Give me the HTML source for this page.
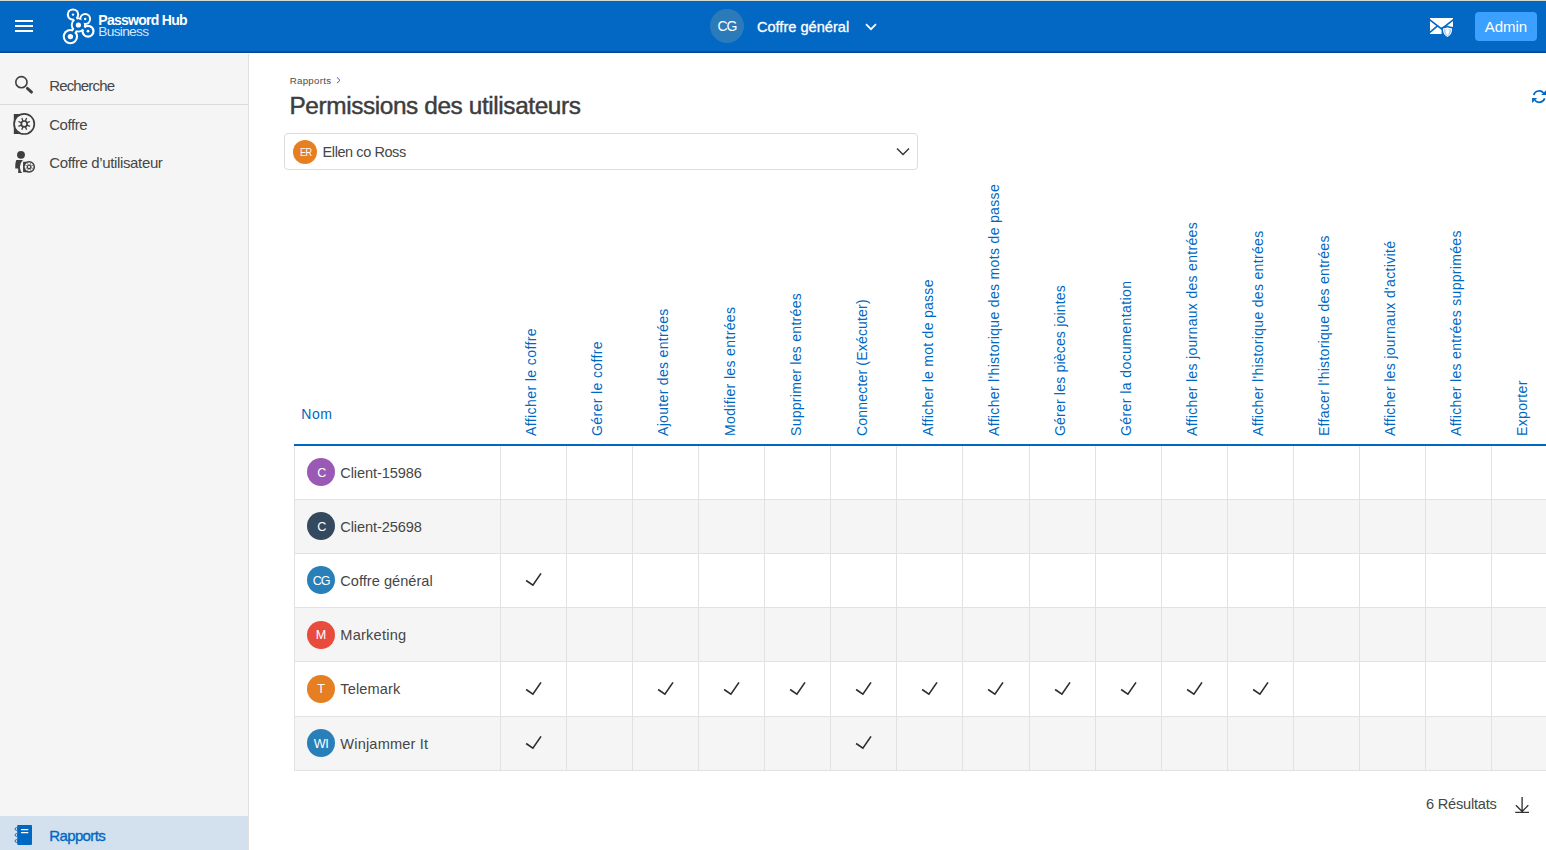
<!DOCTYPE html>
<html lang="fr"><head><meta charset="utf-8"><title>Permissions des utilisateurs - Password Hub Business</title>
<style>
*{box-sizing:border-box;margin:0;padding:0}
html,body{width:1546px;height:850px;overflow:hidden;background:#fff;font-family:"Liberation Sans",sans-serif;}
body{position:relative}
#topstrip{position:absolute;left:0;top:0;width:1546px;height:1px;background:#d6dbd0}
#hdr{position:absolute;left:0;top:1px;width:1546px;height:52px;background:#0368c3;border-top:1px solid #0262c0;border-bottom:1px solid #004696;box-shadow:inset 0 -1px 0 #02549f}
#side{position:absolute;left:0;top:54px;width:249px;height:796px;background:#f5f5f5;border-right:1px solid #e0e0e0}
#side .sep{position:absolute;left:0;top:50px;width:248px;height:1px;background:#dcdcdc}
#side .act{position:absolute;left:0;top:762px;width:248px;height:34px;background:#d3e1ef}
svg{position:absolute;overflow:visible}
.av{position:absolute;border-radius:50%;color:#fff;text-align:center;white-space:nowrap}
#sel{position:absolute;left:284px;top:133px;width:634px;height:37px;border:1px solid #dcdcdc;border-radius:4px;background:#fff}
#grid{position:absolute;left:294px;top:0;width:1400px;height:850px}
.row{position:absolute;left:294px;width:1300px;border-bottom:1px solid #e2e2e2;border-left:1px solid #e2e2e2}
.row.alt{background:#f5f5f5}
.vl{position:absolute;top:446px;width:1px;height:325px;background:#e2e2e2}
.hl{position:absolute;left:294px;top:444px;width:1300px;height:2px;background:#0068c3}
.ch{position:absolute;transform-origin:0 0;transform:rotate(-90deg);white-space:nowrap;color:#0068c3;font-size:14px;line-height:14px}
</style></head><body>

<div id="topstrip"></div>
<header id="hdr"></header>
<svg style="left:15px;top:20px" width="18" height="12" viewBox="0 0 18 12"><path d="M0 1h18M0 6h18M0 11h18" stroke="#fff" stroke-width="2" fill="none"/></svg>
<svg style="left:60px;top:6px" width="40" height="42" viewBox="60 6 40 42"><g fill="#fff" stroke="#fff" stroke-width="6.2" stroke-linecap="round"><circle cx="78.4" cy="25.0" r="7.6" stroke="none"/><circle cx="73.0" cy="14.6" r="6.2" stroke="none"/><path d="M78.4 25.0L73.0 14.6"/><circle cx="85.2" cy="19.0" r="5.9" stroke="none"/><path d="M78.4 25.0L85.2 19.0"/><circle cx="88.0" cy="31.2" r="6.5" stroke="none"/><path d="M78.4 25.0L88.0 31.2"/><circle cx="70.4" cy="36.6" r="7.7" stroke="none"/><path d="M78.4 25.0L70.4 36.6"/></g><g fill="#0068c3" stroke="#0068c3" stroke-width="2.2"><circle cx="78.4" cy="25.0" r="5.7" stroke="none"/><circle cx="73.0" cy="14.6" r="4.1" stroke="none"/><path d="M78.4 25.0L73.0 14.6"/><circle cx="85.2" cy="19.0" r="3.9" stroke="none"/><path d="M78.4 25.0L85.2 19.0"/><circle cx="88.0" cy="31.2" r="4.3" stroke="none"/><path d="M78.4 25.0L88.0 31.2"/><circle cx="70.4" cy="36.6" r="5.6" stroke="none"/><path d="M78.4 25.0L70.4 36.6"/></g><g fill="#fff"><circle cx="78.4" cy="25.0" r="2.6"/><circle cx="73.0" cy="14.6" r="1.2"/><circle cx="85.2" cy="19.0" r="1.2"/><circle cx="88.0" cy="31.2" r="1.35"/><circle cx="70.4" cy="36.6" r="2.7"/></g></svg>
<span style="position:absolute;left:98.3px;top:13.05px;font-size:14px;line-height:14px;letter-spacing:-0.721px;color:#fff;font-weight:700;white-space:nowrap;">Password Hub</span>
<span style="position:absolute;left:98.3px;top:25.00px;font-size:13.7px;line-height:13.7px;letter-spacing:-0.693px;color:#d6e6f6;font-weight:400;white-space:nowrap;">Business</span>
<div class="av" style="left:710px;top:9px;width:34px;height:34px;background:#2b7bbb"></div>
<span style="position:absolute;left:717.4px;top:19.35px;font-size:14px;line-height:14px;letter-spacing:-1.1px;color:#fff;font-weight:400;white-space:nowrap;">CG</span>
<span style="position:absolute;left:756.9px;top:20.14px;font-size:14.6px;line-height:14.6px;letter-spacing:0.006px;color:#fff;font-weight:400;white-space:nowrap;-webkit-text-stroke:0.3px #fff;">Coffre général</span>
<svg style="left:865px;top:23px" width="12" height="8" viewBox="0 0 12 8"><path d="M1 1.2l5 5 5-5" stroke="#fff" stroke-width="1.7" fill="none"/></svg>
<svg style="left:1424px;top:12px" width="36" height="30" viewBox="1424 12 36 30">
<rect x="1430" y="18" width="23" height="16" fill="#fff"/>
<path d="M1429.500 19.700L1441.600 28.900 1453.500 19.700M1429.500 32.600L1437 26.400" stroke="#0068c3" stroke-width="1.600" fill="none"/>
<path d="M1447.500 25.600c1.700 1 3.600 1.400 5.900 1.400v8h-11.800v-8c2.300 0 4.200-.4 5.900-1.400z" fill="#0068c3"/>
<path d="M1447.500 27.300c1.400.8 2.900 1.100 4.600 1.200 0 4.100-1.300 6.800-4.600 8.600-3.300-1.800-4.600-4.500-4.600-8.600 1.700-.1 3.200-.4 4.600-1.200z" fill="#fff"/>
<path d="M1447.500 28.400c1.100.6 2.300.9 3.600 1-.1 3.200-1.100 5.200-3.600 6.600-2.500-1.400-3.500-3.400-3.600-6.600 1.300-.1 2.500-.4 3.600-1z" fill="#a3c6ea"/>
<path d="M1447.500 29.100c.7.300 1.400.500 2.100.6-.1 2.700-.7 4.300-2.100 5.500-1.400-1.200-2-2.800-2.100-5.500.7-.1 1.400-.3 2.100-.6z" fill="#fff"/>
</svg>
<div style="position:absolute;left:1475px;top:12px;width:62px;height:29px;border-radius:4px;background:#3ba0ff"></div>
<span style="position:absolute;left:1484.7px;top:19.00px;font-size:15px;line-height:15px;letter-spacing:-0.006px;color:#fff;font-weight:400;white-space:nowrap;">Admin</span>
<nav id="side"><div class="sep"></div><div class="act"></div></nav>
<svg style="left:14px;top:75px" width="21" height="20" viewBox="14 75 21 20"><circle cx="21.400" cy="82.200" r="5.600" fill="none" stroke="#3f3f3f" stroke-width="1.600"/><path d="M27.400 88.400l4.100 3.700" stroke="#3f3f3f" stroke-width="2.900" stroke-linecap="round"/></svg>
<span style="position:absolute;left:49.2px;top:78.30px;font-size:15px;line-height:15px;letter-spacing:-0.839px;color:#464646;font-weight:400;white-space:nowrap;">Recherche</span>
<svg style="left:13px;top:112px" width="23" height="24" viewBox="13 112 23 24">
<rect x="13.800" y="114" width="11" height="20" fill="#3f3f3f"/>
<circle cx="24.200" cy="123.900" r="10.100" fill="#f5f5f5" stroke="#3f3f3f" stroke-width="1.700"/>
<circle cx="24.200" cy="123.900" r="2.900" fill="none" stroke="#3f3f3f" stroke-width="1.700"/>
<path d="M25.42 120.94L26.61 118.08M27.16 122.68L30.02 121.49M27.16 125.12L30.02 126.31M25.42 126.86L26.61 129.72M22.98 126.86L21.79 129.72M21.24 125.12L18.38 126.31M21.24 122.68L18.38 121.49M22.98 120.94L21.79 118.08" stroke="#3f3f3f" stroke-width="1.300" fill="none"/>
</svg>
<span style="position:absolute;left:49.2px;top:117.30px;font-size:15px;line-height:15px;letter-spacing:-0.43px;color:#464646;font-weight:400;white-space:nowrap;">Coffre</span>
<svg style="left:14px;top:150px" width="23" height="24" viewBox="14 150 23 24">
<circle cx="21" cy="154.850" r="3.950" fill="#3f3f3f"/>
<path d="M16.300 160.100h7.800v12.800h-5.900v-4.500h-2.900c-.2-2.900 0-5.500 1-8.300z" fill="#3f3f3f"/>
<circle cx="29.100" cy="166.900" r="9.200" fill="#f5f5f5"/>
<rect x="23.100" y="161.800" width="6" height="10.400" fill="#3f3f3f"/>
<circle cx="29.100" cy="166.900" r="5.200" fill="#f5f5f5" stroke="#3f3f3f" stroke-width="1.500"/>
<circle cx="29.100" cy="166.900" r="1.700" fill="none" stroke="#3f3f3f" stroke-width="1.100"/>
<path d="M29.79 165.24L30.59 163.30M30.76 166.21L32.70 165.41M30.76 167.59L32.70 168.39M29.79 168.56L30.59 170.50M28.41 168.56L27.61 170.50M27.44 167.59L25.50 168.39M27.44 166.21L25.50 165.41M28.41 165.24L27.61 163.30" stroke="#3f3f3f" stroke-width=".8" fill="none"/>
</svg>
<span style="position:absolute;left:49.2px;top:155.30px;font-size:15px;line-height:15px;letter-spacing:-0.366px;color:#464646;font-weight:400;white-space:nowrap;">Coffre d’utilisateur</span>
<svg style="left:14px;top:824px" width="19" height="22" viewBox="14 824 19 22">
<rect x="17.200" y="824.900" width="14.800" height="20" rx=".8" fill="#0068c3"/>
<g fill="none" stroke="#0068c3" stroke-width=".9"><circle cx="16.500" cy="829" r="1.400"/><circle cx="16.500" cy="835" r="1.400"/><circle cx="16.500" cy="841" r="1.400"/></g>
<path d="M21 829.600h7.300M21 832.600h7.300" stroke="#fff" stroke-width="1.100"/>
</svg>
<span style="position:absolute;left:49.3px;top:828.30px;font-size:15px;line-height:15px;letter-spacing:-0.634px;color:#0068c3;font-weight:400;white-space:nowrap;-webkit-text-stroke:0.35px #0068c3;">Rapports</span>
<span style="position:absolute;left:289.7px;top:76.39px;font-size:9.7px;line-height:9.7px;letter-spacing:0.298px;color:#4a4a4a;font-weight:400;white-space:nowrap;">Rapports</span>
<svg style="left:336px;top:77px" width="5" height="7" viewBox="0 0 5 7"><path d="M1 .4l3 2.900-3 2.900" stroke="#4f55a8" stroke-width="1" fill="none"/></svg>
<h1 style="position:absolute;left:289.5px;top:93.85px;font-size:24.4px;line-height:24.4px;letter-spacing:-0.403px;color:#3d3d3d;font-weight:400;white-space:nowrap;-webkit-text-stroke:0.45px #3d3d3d;">Permissions des utilisateurs</h1>
<svg style="left:1530px;top:88px" width="18" height="17" viewBox="1530 88 18 17"><g fill="none" stroke="#0068c3" stroke-width="1.700"><path d="M1533.750 94.930A5.700 5.700 0 0 1 1543.570 92.940"/><path d="M1544.650 98.270A5.700 5.700 0 0 1 1534.830 100.260"/></g><path d="M1546.300 90v5.100h-5.100zM1532.100 103v-5.100h5.100z" fill="#0068c3"/></svg>
<div id="sel"></div>
<div class="av" style="left:293px;top:140px;width:24px;height:24px;background:#e67e22"></div>
<span style="position:absolute;left:299.6px;top:146.86px;font-size:10.8px;line-height:10.8px;letter-spacing:-0.7px;color:#fff;font-weight:400;white-space:nowrap;transform:scaleX(.84);transform-origin:0 0;">ER</span>
<span style="position:absolute;left:322.6px;top:145.03px;font-size:14.5px;line-height:14.5px;letter-spacing:-0.42px;color:#464646;font-weight:400;white-space:nowrap;">Ellen co Ross</span>
<svg style="left:896px;top:147px" width="14" height="9" viewBox="0 0 14 9"><path d="M1 1.500l6 6 6-6" stroke="#333" stroke-width="1.400" fill="none"/></svg>
<span style="position:absolute;left:301.3px;top:407.45px;font-size:14px;line-height:14px;letter-spacing:0.479px;color:#0068c3;font-weight:400;white-space:nowrap;">Nom</span>
<div class="ch" style="left:524.35px;top:435.6px;letter-spacing:0.408px">Afficher le coffre</div>
<div class="ch" style="left:590.42px;top:435.6px;letter-spacing:0.384px">Gérer le coffre</div>
<div class="ch" style="left:656.48px;top:435.6px;letter-spacing:0.326px">Ajouter des entrées</div>
<div class="ch" style="left:722.55px;top:435.6px;letter-spacing:0.356px">Modifier les entrées</div>
<div class="ch" style="left:788.62px;top:435.6px;letter-spacing:0.288px">Supprimer les entrées</div>
<div class="ch" style="left:854.68px;top:435.6px;letter-spacing:0.187px">Connecter (Exécuter)</div>
<div class="ch" style="left:920.75px;top:435.6px;letter-spacing:0.282px">Afficher le mot de passe</div>
<div class="ch" style="left:986.82px;top:435.6px;letter-spacing:0.334px">Afficher l'historique des mots de passe</div>
<div class="ch" style="left:1052.88px;top:435.6px;letter-spacing:0.196px">Gérer les pièces jointes</div>
<div class="ch" style="left:1118.95px;top:435.6px;letter-spacing:0.418px">Gérer la documentation</div>
<div class="ch" style="left:1185.02px;top:435.6px;letter-spacing:0.314px">Afficher les journaux des entrées</div>
<div class="ch" style="left:1251.08px;top:435.6px;letter-spacing:0.329px">Afficher l'historique des entrées</div>
<div class="ch" style="left:1317.15px;top:435.6px;letter-spacing:0.287px">Effacer l'historique des entrées</div>
<div class="ch" style="left:1383.22px;top:435.6px;letter-spacing:0.337px">Afficher les journaux d'activité</div>
<div class="ch" style="left:1449.28px;top:435.6px;letter-spacing:0.321px">Afficher les entrées supprimées</div>
<div class="ch" style="left:1515.35px;top:435.6px;letter-spacing:0.347px">Exporter</div>
<div class="hl"></div>
<div class="row" style="top:446px;height:54px"></div>
<div class="av" style="left:307px;top:458px;width:28px;height:28px;background:#9b59b6"></div>
<span style="position:absolute;left:317.25px;top:467.13px;font-size:12.6px;line-height:12.6px;letter-spacing:-1.609px;color:#fff;font-weight:400;white-space:nowrap;">C</span>
<span style="position:absolute;left:340.3px;top:465.54px;font-size:14.6px;line-height:14.6px;letter-spacing:-0.105px;color:#464646;font-weight:400;white-space:nowrap;">Client-15986</span>
<div class="row alt" style="top:500px;height:54px"></div>
<div class="av" style="left:307px;top:512px;width:28px;height:28px;background:#34495e"></div>
<span style="position:absolute;left:317.25px;top:521.13px;font-size:12.6px;line-height:12.6px;letter-spacing:-1.609px;color:#fff;font-weight:400;white-space:nowrap;">C</span>
<span style="position:absolute;left:340.3px;top:519.54px;font-size:14.6px;line-height:14.6px;letter-spacing:-0.105px;color:#464646;font-weight:400;white-space:nowrap;">Client-25698</span>
<div class="row" style="top:554px;height:54px"></div>
<div class="av" style="left:307px;top:566px;width:28px;height:28px;background:#2980b9"></div>
<span style="position:absolute;left:312.75px;top:575.13px;font-size:12.6px;line-height:12.6px;letter-spacing:-1.195px;color:#fff;font-weight:400;white-space:nowrap;">CG</span>
<span style="position:absolute;left:340.3px;top:573.54px;font-size:14.6px;line-height:14.6px;letter-spacing:0.013px;color:#464646;font-weight:400;white-space:nowrap;">Coffre général</span>
<svg style="left:525.0px;top:572.1px" width="17" height="15" viewBox="0 0 17 15"><path d="M1.100 8.500L7.900 13.200 16 1.400" stroke="#2e2e2e" stroke-width="1.650" fill="none"/></svg>
<div class="row alt" style="top:608px;height:54px"></div>
<div class="av" style="left:307px;top:621px;width:28px;height:28px;background:#e74c3c"></div>
<span style="position:absolute;left:315.8px;top:629.13px;font-size:12.6px;line-height:12.6px;letter-spacing:-0.1px;color:#fff;font-weight:400;white-space:nowrap;">M</span>
<span style="position:absolute;left:340.3px;top:627.54px;font-size:14.6px;line-height:14.6px;letter-spacing:0.214px;color:#464646;font-weight:400;white-space:nowrap;">Marketing</span>
<div class="row" style="top:662px;height:55px"></div>
<div class="av" style="left:307px;top:675px;width:28px;height:28px;background:#e67e22"></div>
<span style="position:absolute;left:317.25px;top:683.13px;font-size:12.6px;line-height:12.6px;letter-spacing:-0.203px;color:#fff;font-weight:400;white-space:nowrap;">T</span>
<span style="position:absolute;left:340.3px;top:681.54px;font-size:14.6px;line-height:14.6px;letter-spacing:0.1px;color:#464646;font-weight:400;white-space:nowrap;">Telemark</span>
<svg style="left:525.0px;top:680.6px" width="17" height="15" viewBox="0 0 17 15"><path d="M1.100 8.500L7.900 13.200 16 1.400" stroke="#2e2e2e" stroke-width="1.650" fill="none"/></svg>
<svg style="left:657.0px;top:680.6px" width="17" height="15" viewBox="0 0 17 15"><path d="M1.100 8.500L7.900 13.200 16 1.400" stroke="#2e2e2e" stroke-width="1.650" fill="none"/></svg>
<svg style="left:723.0px;top:680.6px" width="17" height="15" viewBox="0 0 17 15"><path d="M1.100 8.500L7.900 13.200 16 1.400" stroke="#2e2e2e" stroke-width="1.650" fill="none"/></svg>
<svg style="left:789.0px;top:680.6px" width="17" height="15" viewBox="0 0 17 15"><path d="M1.100 8.500L7.900 13.200 16 1.400" stroke="#2e2e2e" stroke-width="1.650" fill="none"/></svg>
<svg style="left:855.0px;top:680.6px" width="17" height="15" viewBox="0 0 17 15"><path d="M1.100 8.500L7.900 13.200 16 1.400" stroke="#2e2e2e" stroke-width="1.650" fill="none"/></svg>
<svg style="left:921.0px;top:680.6px" width="17" height="15" viewBox="0 0 17 15"><path d="M1.100 8.500L7.900 13.200 16 1.400" stroke="#2e2e2e" stroke-width="1.650" fill="none"/></svg>
<svg style="left:987.0px;top:680.6px" width="17" height="15" viewBox="0 0 17 15"><path d="M1.100 8.500L7.900 13.200 16 1.400" stroke="#2e2e2e" stroke-width="1.650" fill="none"/></svg>
<svg style="left:1054.0px;top:680.6px" width="17" height="15" viewBox="0 0 17 15"><path d="M1.100 8.500L7.900 13.200 16 1.400" stroke="#2e2e2e" stroke-width="1.650" fill="none"/></svg>
<svg style="left:1120.0px;top:680.6px" width="17" height="15" viewBox="0 0 17 15"><path d="M1.100 8.500L7.900 13.200 16 1.400" stroke="#2e2e2e" stroke-width="1.650" fill="none"/></svg>
<svg style="left:1186.0px;top:680.6px" width="17" height="15" viewBox="0 0 17 15"><path d="M1.100 8.500L7.900 13.200 16 1.400" stroke="#2e2e2e" stroke-width="1.650" fill="none"/></svg>
<svg style="left:1252.0px;top:680.6px" width="17" height="15" viewBox="0 0 17 15"><path d="M1.100 8.500L7.900 13.200 16 1.400" stroke="#2e2e2e" stroke-width="1.650" fill="none"/></svg>
<div class="row alt" style="top:717px;height:54px"></div>
<div class="av" style="left:307px;top:729px;width:28px;height:28px;background:#2980b9"></div>
<span style="position:absolute;left:313.75px;top:738.43px;font-size:12.6px;line-height:12.6px;letter-spacing:-0.445px;color:#fff;font-weight:400;white-space:nowrap;">WI</span>
<span style="position:absolute;left:340.3px;top:736.84px;font-size:14.6px;line-height:14.6px;letter-spacing:0.171px;color:#464646;font-weight:400;white-space:nowrap;">Winjammer It</span>
<svg style="left:525.0px;top:735.1px" width="17" height="15" viewBox="0 0 17 15"><path d="M1.100 8.500L7.900 13.200 16 1.400" stroke="#2e2e2e" stroke-width="1.650" fill="none"/></svg>
<svg style="left:855.0px;top:735.1px" width="17" height="15" viewBox="0 0 17 15"><path d="M1.100 8.500L7.900 13.200 16 1.400" stroke="#2e2e2e" stroke-width="1.650" fill="none"/></svg>
<div class="vl" style="left:500px"></div>
<div class="vl" style="left:566px"></div>
<div class="vl" style="left:632px"></div>
<div class="vl" style="left:698px"></div>
<div class="vl" style="left:764px"></div>
<div class="vl" style="left:830px"></div>
<div class="vl" style="left:896px"></div>
<div class="vl" style="left:962px"></div>
<div class="vl" style="left:1029px"></div>
<div class="vl" style="left:1095px"></div>
<div class="vl" style="left:1161px"></div>
<div class="vl" style="left:1227px"></div>
<div class="vl" style="left:1293px"></div>
<div class="vl" style="left:1359px"></div>
<div class="vl" style="left:1425px"></div>
<div class="vl" style="left:1491px"></div>
<div class="vl" style="left:1557px"></div>
<span style="position:absolute;left:1426.1px;top:796.64px;font-size:14.6px;line-height:14.6px;letter-spacing:-0.229px;color:#464646;font-weight:400;white-space:nowrap;">6 Résultats</span>
<svg style="left:1514px;top:796px" width="16" height="18" viewBox="1514 796 16 18"><path d="M1522.100 797V811.300M1515.900 805.300L1522.100 811.500 1528.300 805.300M1515.200 812.300H1529" stroke="#333" stroke-width="1.350" fill="none"/></svg>
</body></html>
